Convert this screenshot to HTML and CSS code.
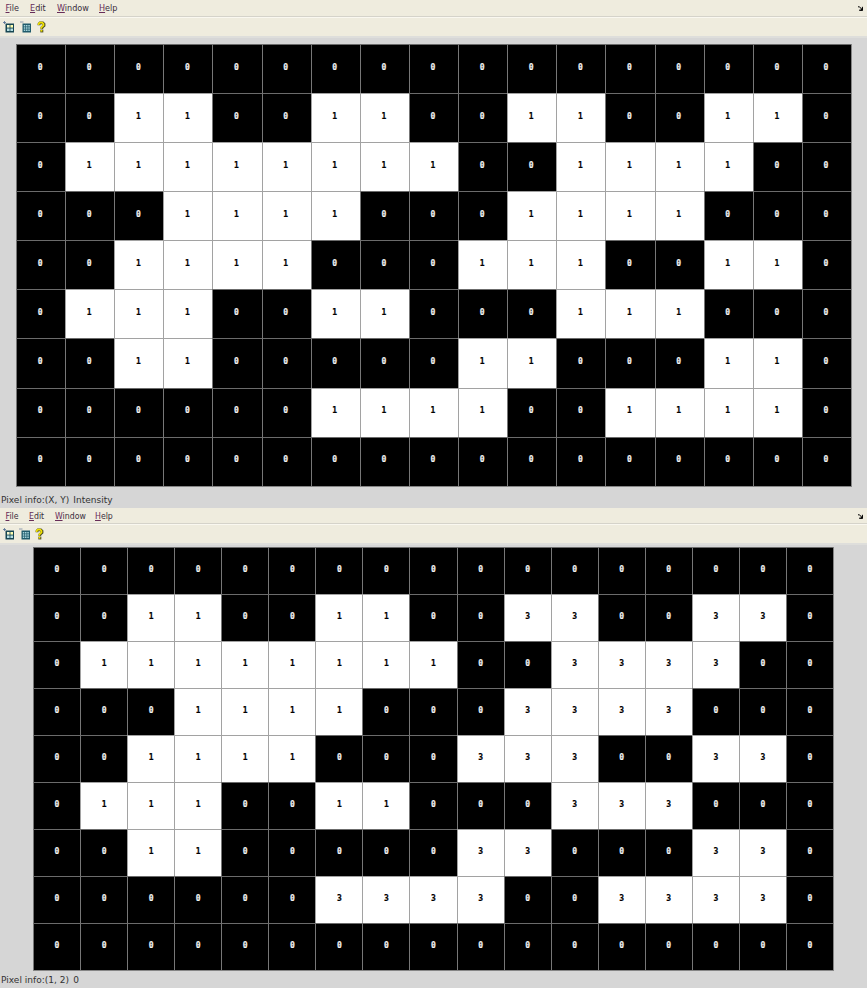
FILE: index.html
```html
<!DOCTYPE html>
<html lang="en">
<head>
<meta charset="utf-8">
<title>Pixel Region</title>
<link rel="stylesheet" href="styles.css">
</head>
<body>
<svg class="defs" width="0" height="0">
  <symbol id="plus-grid" viewBox="0 0 12 12">
    <path d="M0 1.5h3M1.5 0v3" stroke="#536e95" stroke-width=".8" fill="none"/>
    <path d="M2.5 2.5H11v9H2.5z" fill="#174653"/>
    <path d="M4 4h2.6v2.6H4z" fill="#f8f8ce"/><path d="M7.4 4H10v2.6H7.4z" fill="#ffffb0"/>
    <path d="M4 7.6h2.6v2.5H4zM7.4 7.6H10v2.5H7.4z" fill="#b7e0e4"/>
  </symbol>
  <symbol id="minus-grid" viewBox="0 0 12 12">
    <path d="M0 1h3.5" stroke="#7788a3" stroke-width=".8" fill="none"/>
    <path d="M2.5 2.5H11v9H2.5z" fill="#205b6c"/>
    <path d="M3.8 4h1.5v1.5H3.8zM6 4h1.5v1.5H6zM8.3 4h1.5v1.5H8.3zM3.8 6.3h1.5v1.5H3.8zM6 6.3h1.5v1.5H6zM8.3 6.3h1.5v1.5H8.3zM3.8 8.6h1.5v1.5H3.8zM6 8.6h1.5v1.5H6zM8.3 8.6h1.5v1.5H8.3z" fill="#a8d5dc"/>
  </symbol>
  <symbol id="help" viewBox="0 0 10 12">
    <path d="M2 4.3V3l1-1.1h2.8L7 3v1.6L4.9 6.6V8" stroke="#454722" stroke-width="2.8" fill="none"/>
    <path d="M3.3 8.6h3v2.8h-3z" fill="#454722"/>
    <path d="M1.7 4V2.8l1-1.2h2.6l1.2 1.2v1.5L4.4 6.3v1.5" stroke="#f0e000" stroke-width="1.7" fill="none"/>
    <path d="M3.5 9h1.9v1.6H3.5z" fill="#f0e000"/>
  </symbol>
  <symbol id="dock" viewBox="0 0 5 5">
    <path d="M0 .8h1.5L3.5 3M4.4 .8v3.4H1" stroke="#000" stroke-width="1" fill="none"/>
    <path d="M4.8 1.5v3.2H1.6z"/>
  </symbol>
</svg>
<section class="window first">
  <nav class="menu"><span><u>F</u>ile</span><span><u>E</u>dit</span><span><u>W</u>indow</span><span><u>H</u>elp</span><svg class="dock"><use href="#dock"/></svg></nav>
  <div class="tools"><svg><use href="#plus-grid"/></svg><svg><use href="#minus-grid"/></svg><svg class="help"><use href="#help"/></svg></div>
  <div class="pixels" id="binary"></div>
  <footer>Pixel info:<span>(X, Y)</span><span class="value">Intensity</span></footer>
</section>
<section class="window second">
  <nav class="menu"><span><u>F</u>ile</span><span><u>E</u>dit</span><span><u>W</u>indow</span><span><u>H</u>elp</span><svg class="dock"><use href="#dock"/></svg></nav>
  <div class="tools"><svg><use href="#plus-grid"/></svg><svg><use href="#minus-grid"/></svg><svg class="help"><use href="#help"/></svg></div>
  <div class="pixels" id="labels"></div>
  <footer>Pixel info:<span>(1, 2)</span><span class="value">0</span></footer>
</section>
<script src="script.js"></script>
</body>
</html>
```
FILE: styles.css
```css
* { box-sizing: border-box; }
body { margin: 0; width: 867px; height: 988px; overflow: hidden; background: #d6d6d6; color: #333; }
.defs { position: absolute; }
.window { display: flex; flex-direction: column; }
.first { height: 508px; }
.second { height: 480px; }
.menu {
  display: flex; align-items: center; height: 17px; padding: 0 4px 0 5.5px;
  background: #efecde; border-bottom: 1px solid #d5d3ca;
  font: 9px/16px "DejaVu Sans Condensed", "DejaVu Sans", sans-serif; color: #392c3c;
}
.menu span { flex: none; width: 42px; }
.menu span:nth-child(1) { width: 24.5px; }
.menu span:nth-child(2) { width: 27px; }
.menu u { color: #672d59; text-underline-offset: 1px; }
.dock { width: 5px; height: 5px; margin-left: auto; }
.tools {
  display: flex; align-items: flex-start; height: 21px; padding: 3px 0 0 3px;
  background: #efecde; border-top: 1px solid #faf8f0; border-bottom: 2px solid #dededb;
}
.tools svg { width: 12px; height: 12px; margin-right: 5px; }
.tools .help { width: 10px; }
.pixels {
  display: grid; grid-template-columns: repeat(17, 1fr); grid-template-rows: repeat(9, 1fr);
  border-right: 1px solid #858585; border-bottom: 1px solid #858585;
  font: bold 8px/10px "DejaVu Sans Mono", monospace;
}
.first .pixels { width: 836px; height: 442.7px; margin: 6px 0 0 16px; }
.second .pixels { width: 801px; height: 424px; margin: 2px 0 0 33px; }
.cell {
  display: flex; align-items: center; justify-content: center; padding: 0 1px 3px 0;
  color: #f2f2f2; background-color: #000;
  border-left: 1px solid #777; border-top: 1px solid #6b6b6b;
  -webkit-text-stroke: .2px currentColor;
}
.first .cell { padding-right: 2px; }
.second .cell { padding-right: 0; }
.on { color: #000; background-color: #fff; border-color: #a2a2a2; }
footer { display: flex; padding: 7.3px 0 0 1px; font: 9px/13px "DejaVu Sans", sans-serif; letter-spacing: .02px; }
.value { margin-left: 4px; }
.second .menu { height: 16px; padding-top: 1px; font-size: 8.7px; line-height: 15px; }
.second .menu span:nth-child(1) { width: 23.5px; }
.second .menu span:nth-child(2) { width: 26px; }
.second .menu span:nth-child(3) { width: 40px; }
.second .tools { padding-top: 3px; }
.second .tools svg { margin-right: 4px; }
.second footer { padding-top: 3px; }
```
FILE: script.js
```js
const binary = [
  "00000000000000000",
  "00110011001100110",
  "01111111100111100",
  "00011110001111000",
  "00111100011100110",
  "01110011000111000",
  "00110000011000110",
  "00000011110011110",
  "00000000000000000"
];
const labels = [
  "00000000000000000",
  "00110011003300330",
  "01111111100333300",
  "00011110003333000",
  "00111100033300330",
  "01110011000333000",
  "00110000033000330",
  "00000033330033330",
  "00000000000000000"
];

function draw(id, rows) {
  const target = document.getElementById(id);
  for (const value of rows.join("")) {
    const cell = document.createElement("div");
    cell.className = value === "0" ? "cell" : "cell on";
    cell.textContent = value;
    target.append(cell);
  }
}
draw("binary", binary);
draw("labels", labels);
```
